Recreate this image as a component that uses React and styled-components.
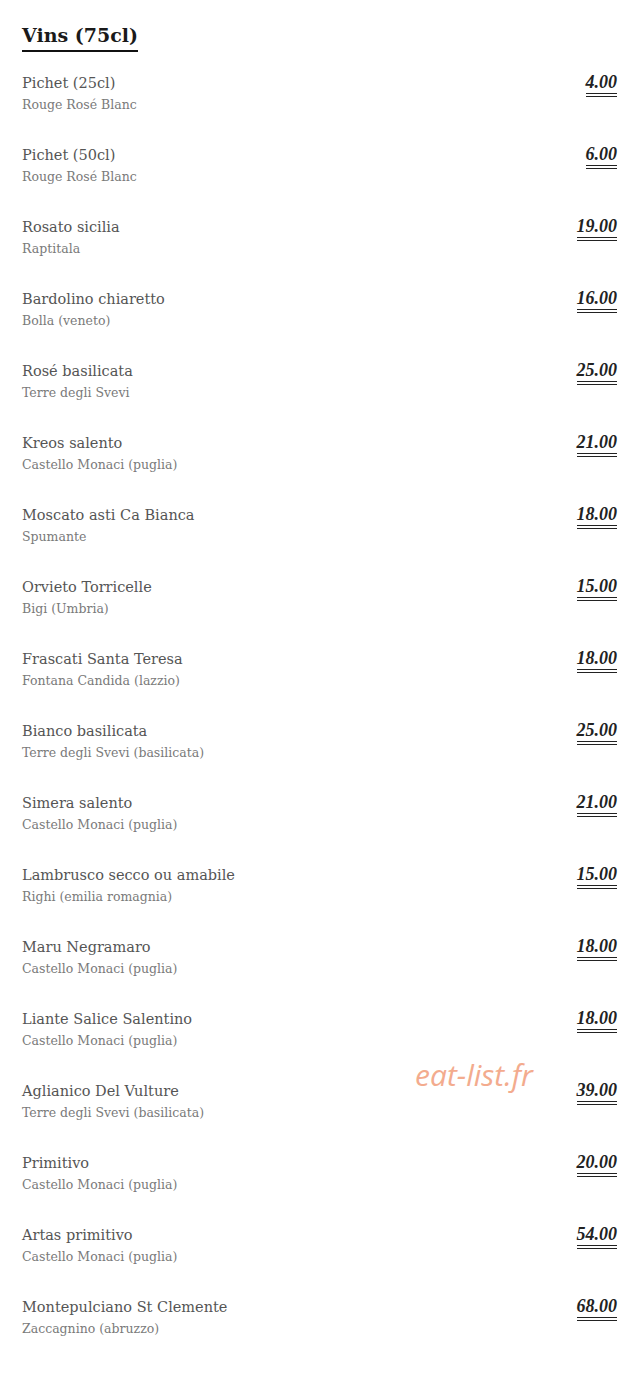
import React from 'react';
import styled, { createGlobalStyle } from 'styled-components';

const GlobalStyle = createGlobalStyle`
  body {
    margin: 0;
    background: #fff;
    font-family: 'DejaVu Serif', 'Liberation Serif', serif;
  }
`;

const Page = styled.div`
  position: relative;
  padding: 22px 26px 40px 22px;
`;

const Heading = styled.h2`
  display: inline-block;
  margin: 0 0 20px;
  padding-bottom: 2px;
  border-bottom: 2px solid #111;
  color: #1a1a1a;
  font-size: 19px;
  font-weight: 700;
  line-height: 26px;
`;

const List = styled.ul`
  list-style: none;
  margin: 0;
  padding: 0;
`;

const Row = styled.li`
  display: flex;
  justify-content: space-between;
  align-items: flex-start;
  height: 72px;
`;

const Details = styled.div`
  display: flex;
  flex-direction: column;
`;

const Name = styled.span`
  color: #555;
  font-size: 14.5px;
  line-height: 22px;
`;

const Origin = styled.span`
  color: #7a7a7a;
  font-size: 12.5px;
  line-height: 22px;
`;

const Price = styled.span`
  margin-top: 1px;
  padding-bottom: 1px;
  border-bottom: 4px double #222;
  color: #222;
  font-family: 'Liberation Serif', serif;
  font-size: 18px;
  font-style: italic;
  font-weight: 700;
  line-height: 19px;
  font-variant-numeric: oldstyle-nums;
`;

const Watermark = styled.span`
  position: absolute;
  left: 415px;
  top: 1054px;
  color: #f2a382;
  font-family: 'Open Sans', sans-serif;
  font-size: 30px;
  font-style: italic;
  opacity: 0.9;
`;

const wines = [
  { name: 'Pichet (25cl)', origin: 'Rouge Rosé Blanc', price: '4.00' },
  { name: 'Pichet (50cl)', origin: 'Rouge Rosé Blanc', price: '6.00' },
  { name: 'Rosato sicilia', origin: 'Raptitala', price: '19.00' },
  { name: 'Bardolino chiaretto', origin: 'Bolla (veneto)', price: '16.00' },
  { name: 'Rosé basilicata', origin: 'Terre degli Svevi', price: '25.00' },
  { name: 'Kreos salento', origin: 'Castello Monaci (puglia)', price: '21.00' },
  { name: 'Moscato asti Ca Bianca', origin: 'Spumante', price: '18.00' },
  { name: 'Orvieto Torricelle', origin: 'Bigi (Umbria)', price: '15.00' },
  { name: 'Frascati Santa Teresa', origin: 'Fontana Candida (lazzio)', price: '18.00' },
  { name: 'Bianco basilicata', origin: 'Terre degli Svevi (basilicata)', price: '25.00' },
  { name: 'Simera salento', origin: 'Castello Monaci (puglia)', price: '21.00' },
  { name: 'Lambrusco secco ou amabile', origin: 'Righi (emilia romagnia)', price: '15.00' },
  { name: 'Maru Negramaro', origin: 'Castello Monaci (puglia)', price: '18.00' },
  { name: 'Liante Salice Salentino', origin: 'Castello Monaci (puglia)', price: '18.00' },
  { name: 'Aglianico Del Vulture', origin: 'Terre degli Svevi (basilicata)', price: '39.00' },
  { name: 'Primitivo', origin: 'Castello Monaci (puglia)', price: '20.00' },
  { name: 'Artas primitivo', origin: 'Castello Monaci (puglia)', price: '54.00' },
  { name: 'Montepulciano St Clemente', origin: 'Zaccagnino (abruzzo)', price: '68.00' },
];

const App = () => (
  <Page>
    <GlobalStyle />
    <Heading>Vins (75cl)</Heading>
    <List>
      {wines.map((wine, i) => (
        <Row key={i}>
          <Details>
            <Name>{wine.name}</Name>
            <Origin>{wine.origin}</Origin>
          </Details>
          <Price>{wine.price}</Price>
        </Row>
      ))}
    </List>
    <Watermark>eat-list.fr</Watermark>
  </Page>
);

export default App;
